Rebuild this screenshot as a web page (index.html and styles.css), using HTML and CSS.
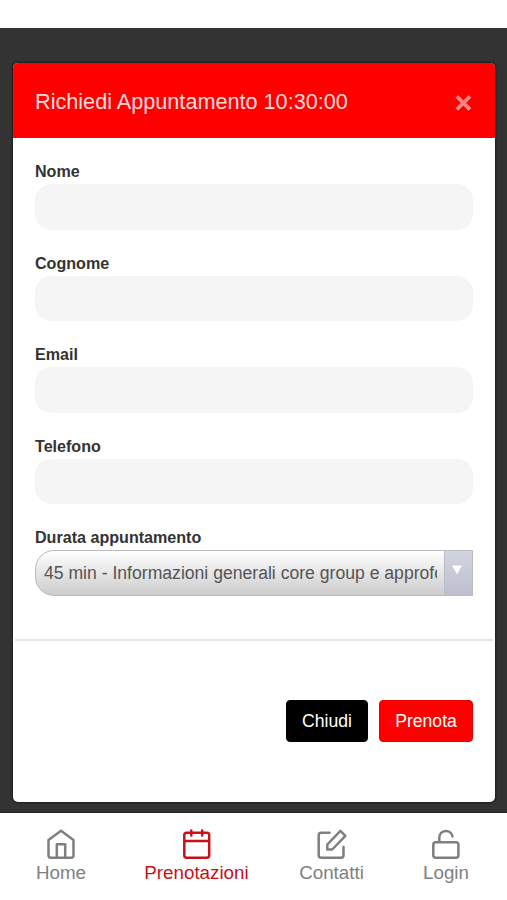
FILE: index.html
```html
<!DOCTYPE html>
<html lang="it">
<head>
<meta charset="utf-8">
<title>Richiedi Appuntamento</title>
<link rel="stylesheet" href="styles.css">
</head>
<body>
<div class="page">
  <main class="backdrop">
    <section class="modal">
      <header class="modal-header">
        <h1>Richiedi Appuntamento 10:30:00</h1>
        <button class="close" aria-label="Chiudi finestra">
          <svg width="20" height="20" viewBox="0 0 20 20"><path d="M2.8 3.4L16 16.6M16 3.4L2.8 16.6"/></svg>
        </button>
      </header>
      <form class="modal-body">
        <div class="field"><label for="nome">Nome</label><input id="nome" type="text"></div>
        <div class="field"><label for="cognome">Cognome</label><input id="cognome" type="text"></div>
        <div class="field"><label for="email">Email</label><input id="email" type="text"></div>
        <div class="field"><label for="telefono">Telefono</label><input id="telefono" type="text"></div>
        <div class="field">
          <label>Durata appuntamento</label>
          <div class="select">
            <div class="select-value"><span>45 min - Informazioni generali core group e approfo</span></div>
            <div class="select-arrow"><svg width="10" height="10" viewBox="0 0 10 10"><path d="M0 0.5H10L5 9.5Z"/></svg></div>
          </div>
        </div>
      </form>
      <footer class="modal-footer">
        <button class="btn btn-dark">Chiudi</button>
        <button class="btn btn-red">Prenota</button>
      </footer>
    </section>
  </main>
  <nav class="tabs">
    <a class="tab">
      <svg width="30" height="32" viewBox="0 0 30 32"><path d="M2.5 12L15 2.8L27.5 12V27.2Q27.5 29.7 25 29.7H5Q2.5 29.7 2.5 27.2ZM10.8 29.7V16.2H19.2V29.7"/></svg>
      <span>Home</span>
    </a>
    <a class="tab active">
      <svg width="30" height="32" viewBox="0 0 30 32"><path d="M4.5 4.8H25Q27.2 4.8 27.2 7.3V27.2Q27.2 29.7 24.7 29.7H4.8Q2.3 29.7 2.3 27.2V7.3Q2.3 4.8 4.5 4.8ZM2.3 13H27.2M9.3 2.6V7.4M20.2 2.6V7.4"/></svg>
      <span>Prenotazioni</span>
    </a>
    <a class="tab">
      <svg width="30" height="32" viewBox="0 0 30 32"><path d="M12.5 4.8H4.2Q1.7 4.8 1.7 7.3V27.2Q1.7 29.7 4.2 29.7H24Q26.5 29.7 26.5 27.2V19M10.3 16.5L23.4 2.8L28.4 7.8L15.2 21.5H10.3Z"/></svg>
      <span>Contatti</span>
    </a>
    <a class="tab">
      <svg width="30" height="32" viewBox="0 0 30 32"><path d="M4.8 14.2H25Q27.4 14.2 27.4 16.7V27.2Q27.4 29.7 25 29.7H4.8Q2.3 29.7 2.3 27.2V16.7Q2.3 14.2 4.8 14.2ZM8.3 14.2V9.2A6.6 6.6 0 0 1 21.4 8.4"/></svg>
      <span>Login</span>
    </a>
  </nav>
</div>
</body>
</html>
```

FILE: styles.css
```css
* { box-sizing: border-box; }

body {
  margin: 0;
  background: #fff;
  font-family: "Liberation Sans", Arial, sans-serif;
}

.page {
  height: 900px;
  padding-top: 28px;
  display: flex;
  flex-direction: column;
  overflow: hidden;
}

.backdrop {
  height: 785px;
  padding: 35px 12px 11px 13px;
  background: #333;
  border-bottom: 1px solid #222;
}

.modal {
  height: 739px;
  display: flex;
  flex-direction: column;
  background: #fff;
  border-radius: 5px;
  overflow: hidden;
  box-shadow: 0 0 2px 1px rgba(0, 0, 0, 0.45);
}

.modal-header {
  height: 75px;
  padding: 0 21px 0 22px;
  display: flex;
  align-items: center;
  justify-content: space-between;
  background: #f00;
}

.modal-header h1 {
  margin: 0;
  padding-top: 2px;
  font-size: 21.65px;
  font-weight: 400;
  color: #ffdcdc;
  white-space: nowrap;
}

.close {
  width: 20px;
  height: 20px;
  margin-top: 5px;
  padding: 0;
  border: 0;
  background: none;
}

.close svg {
  display: block;
  fill: none;
  stroke: #ff8080;
  stroke-width: 4;
  filter: drop-shadow(0 1px 0 #b40000);
}

.modal-body {
  height: 501px;
  margin: 0;
  padding: 22px 22px 0 22px;
  display: flex;
  flex-direction: column;
  gap: 22px;
}

.field {
  display: flex;
  flex-direction: column;
}

.field label {
  height: 24px;
  line-height: 23px;
  font-size: 16.1px;
  font-weight: 700;
  color: #333;
}

.field input {
  width: 100%;
  height: 45.5px;
  padding: 0 14px;
  border: 0;
  border-radius: 16px;
  background: #f5f5f5;
}

.select {
  height: 45.5px;
  display: flex;
  border: 1px solid #bbb;
  border-radius: 19px 0 0 19px;
  background: linear-gradient(#fff, #ccc);
  overflow: hidden;
}

.select-value {
  flex: 1;
  min-width: 0;
  padding: 0 7px 0 8px;
}

.select-value span {
  display: block;
  overflow: hidden;
  white-space: nowrap;
  font-size: 17.6px;
  line-height: 45px;
  color: #555;
}

.select-arrow {
  width: 28px;
  padding: 14px 0 0 7px;
  border-left: 1px solid #b9bbc9;
  background: linear-gradient(#d2d5df, #bdbfce);
}

.select-arrow svg {
  display: block;
  fill: #fff;
}

.modal-footer {
  flex: 1;
  margin: 0 2px;
  padding: 59px 20px 0;
  display: flex;
  align-items: flex-start;
  justify-content: flex-end;
  gap: 11px;
  border-top: 2px solid #e5e5e5;
}

.btn {
  height: 42px;
  padding: 0;
  border: 1px solid;
  border-radius: 4px;
  font-family: inherit;
  font-size: 17.6px;
  color: #fff;
}

.btn-dark {
  width: 82px;
  background: #000;
  border-color: #000;
}

.btn-red {
  width: 94px;
  background: #f00;
  border-color: #e60000;
}

.tabs {
  flex: 1;
  padding-top: 15px;
  display: grid;
  grid-template-columns: 122px 149px 121px 108px;
  background: #fff;
}

.tab {
  display: flex;
  flex-direction: column;
  align-items: center;
  color: #7f7f7f;
  font-size: 18.8px;
  line-height: 22px;
}

.tab svg {
  margin-bottom: 2px;
  overflow: visible;
  fill: none;
  stroke: currentColor;
  stroke-width: 2.5;
  stroke-linejoin: round;
  stroke-linecap: round;
}

.tab.active { color: #c8101a; }
```
